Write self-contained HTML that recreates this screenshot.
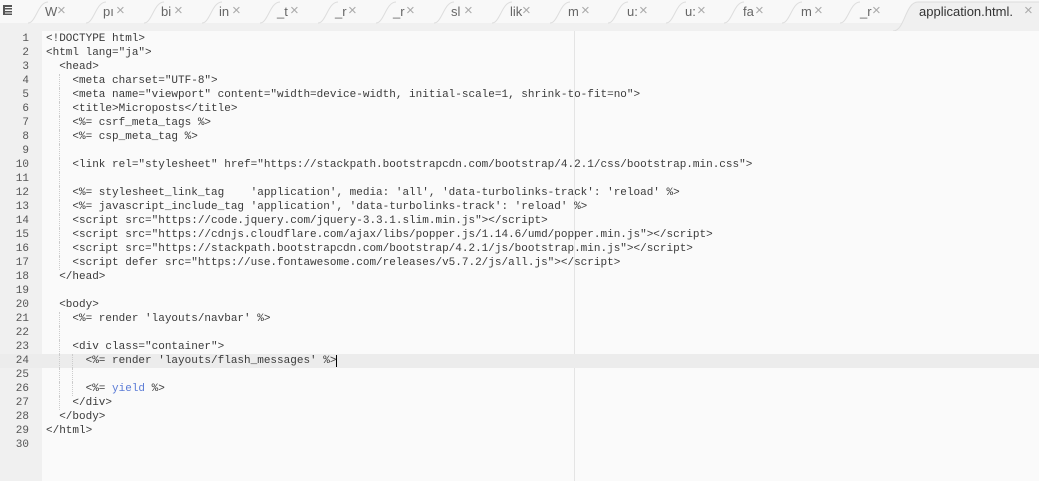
<!DOCTYPE html>
<html><head><meta charset="utf-8"><style>
body{margin:0;width:1039px;height:481px;overflow:hidden;background:#fafafa;position:relative;font-family:"Liberation Sans",sans-serif}
#tabs{position:absolute;left:0;top:0;width:1039px;height:23px;background:#f8f8f8}
#strip{position:absolute;left:0;top:23px;width:1039px;height:8px;background:#f0f0f0}
.t{position:absolute;top:4px;font-size:13px;color:#666}
.x{position:absolute;top:2px;font-size:15px;color:#aaa}
#gut{position:absolute;left:0;top:31px;width:42px;height:450px;background:#f0f0f0}
#code{position:absolute;left:0;top:32px;width:1039px;font-family:"Liberation Mono",monospace;font-size:11px;line-height:14px;color:#3a3a3a}
.l{position:relative;height:14px;white-space:pre}
.n{position:absolute;left:0;width:29px;text-align:right;color:#555}
.c{position:absolute;left:46px}
.hl{background:#ececec}
.y{color:#5b7bd6}
.g{position:absolute;top:0;height:14px;border-left:1px dotted #ccc}
</style></head><body>
<div id="tabs"></div><div id="strip"></div>
<svg style="position:absolute;left:0;top:0" width="1039" height="31">
<rect x="3" y="5" width="9" height="2" fill="#555"/><rect x="3" y="8" width="9" height="1.5" fill="#555"/><rect x="3" y="11" width="9" height="1.5" fill="#555"/><rect x="3" y="13.5" width="9" height="1.5" fill="#555"/><rect x="3" y="5" width="2" height="10" fill="#555"/>
<g fill="none" stroke="#ddd" stroke-width="1">
<path d="M28 23 C36 23 38 2 48 2"/><path d="M86 23 C94 23 96 2 106 2"/><path d="M144 23 C152 23 154 2 164 2"/><path d="M202 23 C210 23 212 2 222 2"/><path d="M260 23 C268 23 270 2 280 2"/><path d="M318 23 C326 23 328 2 338 2"/><path d="M376 23 C384 23 386 2 396 2"/><path d="M434 23 C442 23 444 2 454 2"/><path d="M492 23 C500 23 502 2 512 2"/><path d="M550 23 C558 23 560 2 570 2"/><path d="M608 23 C616 23 618 2 628 2"/><path d="M666 23 C674 23 676 2 686 2"/><path d="M724 23 C732 23 734 2 744 2"/><path d="M782 23 C790 23 792 2 802 2"/><path d="M840 23 C848 23 850 2 860 2"/>
</g>
<path d="M893 31 C905 31 905 2 918 2 L1039 2 L1039 31 Z" fill="#f0f0f0"/>
<path d="M893 31 C905 31 905 2 918 2 L1039 2" fill="none" stroke="#ddd"/>
</svg>
<span class="t" style="left:45px">W</span><span class="x" style="left:57px">×</span>
<span class="t" style="left:103px">pı</span><span class="x" style="left:116px">×</span>
<span class="t" style="left:161px">bi</span><span class="x" style="left:174px">×</span>
<span class="t" style="left:219px">in</span><span class="x" style="left:232px">×</span>
<span class="t" style="left:277px">_t</span><span class="x" style="left:290px">×</span>
<span class="t" style="left:335px">_r</span><span class="x" style="left:348px">×</span>
<span class="t" style="left:393px">_r</span><span class="x" style="left:406px">×</span>
<span class="t" style="left:451px">sl</span><span class="x" style="left:464px">×</span>
<span class="t" style="left:510px">lik</span><span class="x" style="left:522px">×</span>
<span class="t" style="left:568px">m</span><span class="x" style="left:581px">×</span>
<span class="t" style="left:627px">u:</span><span class="x" style="left:639px">×</span>
<span class="t" style="left:685px">u:</span><span class="x" style="left:697px">×</span>
<span class="t" style="left:743px">fa</span><span class="x" style="left:755px">×</span>
<span class="t" style="left:801px">m</span><span class="x" style="left:814px">×</span>
<span class="t" style="left:860px">_r</span><span class="x" style="left:872px">×</span>
<span class="t" style="left:919px;color:#333">application.html.</span><span class="x" style="left:1024px">×</span>
<div id="gut"></div>
<div style="position:absolute;left:574px;top:31px;width:1px;height:450px;background:#e4e4e4"></div>
<div id="code">
<div class="l"><span class="n">1</span><span class="c">&lt;!DOCTYPE html&gt;</span></div>
<div class="l"><span class="n">2</span><span class="c">&lt;html lang="ja"&gt;</span></div>
<div class="l"><span class="n">3</span><span class="c">  &lt;head&gt;</span></div>
<div class="l"><span class="n">4</span><i class="g" style="left:59px"></i><span class="c">    &lt;meta charset="UTF-8"&gt;</span></div>
<div class="l"><span class="n">5</span><i class="g" style="left:59px"></i><span class="c">    &lt;meta name="viewport" content="width=device-width, initial-scale=1, shrink-to-fit=no"&gt;</span></div>
<div class="l"><span class="n">6</span><i class="g" style="left:59px"></i><span class="c">    &lt;title&gt;Microposts&lt;/title&gt;</span></div>
<div class="l"><span class="n">7</span><i class="g" style="left:59px"></i><span class="c">    &lt;%= csrf_meta_tags %&gt;</span></div>
<div class="l"><span class="n">8</span><i class="g" style="left:59px"></i><span class="c">    &lt;%= csp_meta_tag %&gt;</span></div>
<div class="l"><span class="n">9</span><i class="g" style="left:59px"></i><span class="c"></span></div>
<div class="l"><span class="n">10</span><i class="g" style="left:59px"></i><span class="c">    &lt;link rel="stylesheet" href="https://stackpath.bootstrapcdn.com/bootstrap/4.2.1/css/bootstrap.min.css"&gt;</span></div>
<div class="l"><span class="n">11</span><i class="g" style="left:59px"></i><span class="c"></span></div>
<div class="l"><span class="n">12</span><i class="g" style="left:59px"></i><span class="c">    &lt;%= stylesheet_link_tag    'application', media: 'all', 'data-turbolinks-track': 'reload' %&gt;</span></div>
<div class="l"><span class="n">13</span><i class="g" style="left:59px"></i><span class="c">    &lt;%= javascript_include_tag 'application', 'data-turbolinks-track': 'reload' %&gt;</span></div>
<div class="l"><span class="n">14</span><i class="g" style="left:59px"></i><span class="c">    &lt;script src="https://code.jquery.com/jquery-3.3.1.slim.min.js"&gt;&lt;/script&gt;</span></div>
<div class="l"><span class="n">15</span><i class="g" style="left:59px"></i><span class="c">    &lt;script src="https://cdnjs.cloudflare.com/ajax/libs/popper.js/1.14.6/umd/popper.min.js"&gt;&lt;/script&gt;</span></div>
<div class="l"><span class="n">16</span><i class="g" style="left:59px"></i><span class="c">    &lt;script src="https://stackpath.bootstrapcdn.com/bootstrap/4.2.1/js/bootstrap.min.js"&gt;&lt;/script&gt;</span></div>
<div class="l"><span class="n">17</span><i class="g" style="left:59px"></i><span class="c">    &lt;script defer src="https://use.fontawesome.com/releases/v5.7.2/js/all.js"&gt;&lt;/script&gt;</span></div>
<div class="l"><span class="n">18</span><span class="c">  &lt;/head&gt;</span></div>
<div class="l"><span class="n">19</span><span class="c"></span></div>
<div class="l"><span class="n">20</span><span class="c">  &lt;body&gt;</span></div>
<div class="l"><span class="n">21</span><i class="g" style="left:59px"></i><span class="c">    &lt;%= render 'layouts/navbar' %&gt;</span></div>
<div class="l"><span class="n">22</span><i class="g" style="left:59px"></i><span class="c"></span></div>
<div class="l"><span class="n">23</span><i class="g" style="left:59px"></i><span class="c">    &lt;div class="container"&gt;</span></div>
<div class="l hl"><span class="n">24</span><i class="g" style="left:59px"></i><i class="g" style="left:72px"></i><span class="c">      &lt;%= render 'layouts/flash_messages' %&gt;<span style="border-left:1.5px solid #000"></span></span></div>
<div class="l"><span class="n">25</span><i class="g" style="left:59px"></i><i class="g" style="left:72px"></i><span class="c"></span></div>
<div class="l"><span class="n">26</span><i class="g" style="left:59px"></i><i class="g" style="left:72px"></i><span class="c">      &lt;%= <span class="y">yield</span> %&gt;</span></div>
<div class="l"><span class="n">27</span><i class="g" style="left:59px"></i><span class="c">    &lt;/div&gt;</span></div>
<div class="l"><span class="n">28</span><span class="c">  &lt;/body&gt;</span></div>
<div class="l"><span class="n">29</span><span class="c">&lt;/html&gt;</span></div>
<div class="l"><span class="n">30</span><span class="c"></span></div>
</div>
</body></html>
